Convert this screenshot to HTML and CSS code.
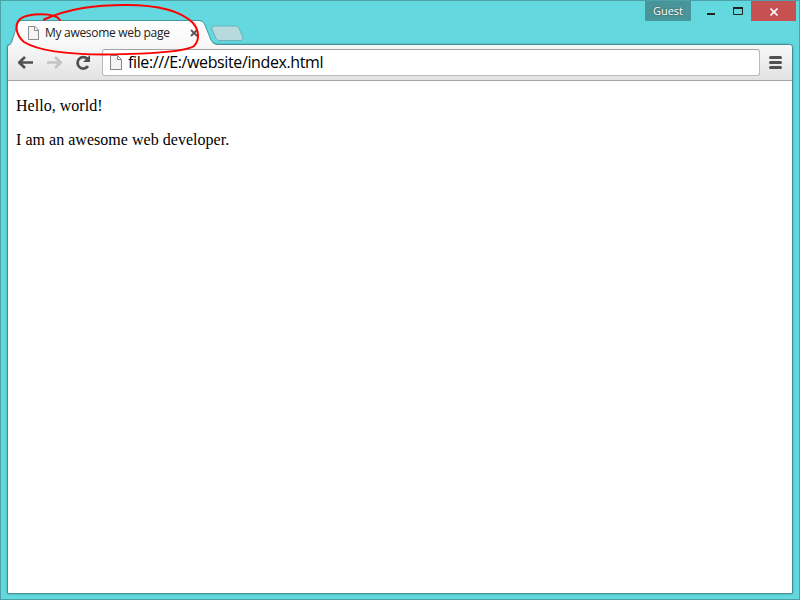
FILE: index.html
```html
<!DOCTYPE html>
<html lang="en">
<head>
<meta charset="utf-8">
<title>My awesome web page</title>
<link rel="stylesheet" href="styles.css">
</head>
<body>
<div class="window">
  <header class="titlebar">
    <div class="tab">
      <svg class="tab-shape" width="214" height="28" viewBox="0 0 214 28">
        <defs><linearGradient id="tabfill" x1="0" y1="0" x2="0" y2="1"><stop offset="0" stop-color="#fff"/><stop offset="1" stop-color="#f7f7f7"/></linearGradient></defs>
        <path d="M1 28V25Q4 25 5 21L10 5Q11 1 15 1H192Q196 1 197.500 4L204 20Q206 24.500 210 24.500H214V28Z" fill="url(#tabfill)"/>
        <path d="M.5 28V26Q4 25 5 21L10 5Q11 .5 15 .5H192Q196 .5 197.500 4L204 20Q206 24.500 210 24.500H214" fill="none" stroke="#43979d"/>
      </svg>
      <svg class="page-icon" width="11" height="14" viewBox="0 0 11 14"><path d="M.5.500H7L10.500 4V13.500H.5ZM6.500 1V4.500H10" fill="#f4f4f4" stroke="#8b8b8b"/></svg>
      <span class="tab-title">My awesome web page</span>
      <svg class="tab-close" width="8" height="8" viewBox="0 0 8 8"><path d="M1 1L7 7M7 1L1 7" stroke="#555" stroke-width="1.800"/></svg>
    </div>
    <svg class="new-tab" width="33" height="17" viewBox="0 0 33 17"><path d="M3 1H25Q27 1 28 3L32 13Q32 15.500 30 15.500H8Q6 15.500 5 13.500L1 4Q0 1 3 1Z" fill="#b7dadf" stroke="#6db2b8"/></svg>
    <div class="controls">
      <span class="guest">Guest</span>
      <svg class="minmax" width="60" height="20" viewBox="0 0 60 20"><path d="M16 12H24V14H16Z" fill="#222"/><path d="M42.500 7H51.500V13.500H42.500Z" fill="none" stroke="#222"/><path d="M42 6H52V8H42Z" fill="#222"/></svg>
      <span class="close"><svg width="8" height="8" viewBox="0 0 8 8"><path d="M.5.500L7.500 7.500M7.500.500L.5 7.500" stroke="#fff" stroke-width="1.600"/></svg></span>
    </div>
  </header>
  <main class="frame">
    <nav class="toolbar">
      <svg class="back" width="17" height="14" viewBox="0 0 17 14"><path d="M8 1L2.200 6.500L8 12M2.500 6.500H16" fill="none" stroke="#505050" stroke-width="2.600" stroke-linejoin="round"/></svg>
      <svg class="forward" width="17" height="14" viewBox="0 0 17 14"><path d="M9 1L14.800 6.500L9 12M14.500 6.500H1" fill="none" stroke="#c3c3c3" stroke-width="2.600" stroke-linejoin="round"/></svg>
      <svg class="reload" width="16" height="16" viewBox="0 0 16 16"><path d="M12.500 4A5.700 5.700 0 1 0 13 11" fill="none" stroke="#505050" stroke-width="2.800"/><path d="M15 0V7H8Z" fill="#505050"/></svg>
      <div class="address">
        <svg class="page-icon" width="12" height="15" viewBox="0 0 12 15"><path d="M.5.500H7.500L11.500 4.500V14.500H.5ZM7.500 1V4.500H11" fill="#f4f4f4" stroke="#858585"/></svg>
        <span class="url">file:///E:/website/index.html</span>
      </div>
      <svg class="menu" width="13" height="13" viewBox="0 0 13 13"><path d="M1.500 1.500H11.500M1.500 6.500H11.500M1.500 11.500H11.500" stroke="#505050" stroke-width="3" stroke-linecap="round"/></svg>
    </nav>
    <section class="document">
      <p>Hello, world!</p>
      <p>I am an awesome web developer.</p>
    </section>
  </main>
  <svg class="annotation" width="220" height="62" viewBox="0 0 220 62"><path d="M44 19.500C70 8 95 5 126 5C165 5 184 14 193 23C199 30 200 40 194 46C185 52 151 54 105 54.500C67 54.500 37 50 24 42C16 35 14 25 20 19C28 13 55 12 60 20" fill="none" stroke="#f00" stroke-width="2" stroke-linecap="round"/></svg>
</div>
</body>
</html>
```
FILE: styles.css
```css
* { box-sizing: border-box; }
body { margin: 0; overflow: hidden; }
svg { display: block; flex: none; }
.window {
  position: relative;
  width: 800px;
  height: 600px;
  border: 1px solid #4da2a8;
  background: #63d8df;
  display: flex;
  flex-direction: column;
  font-family: "Open Sans", "Noto Sans", sans-serif;
}
.titlebar { height: 43px; display: flex; align-items: flex-start; }
.tab {
  position: relative;
  z-index: 1;
  width: 210px;
  height: 28px;
  margin-top: 19px;
  display: flex;
  align-items: center;
  padding: 0 13px 3px 27px;
}
.tab > * { position: relative; }
.tab .tab-shape { position: absolute; left: 6px; top: 0; }
.tab-title { flex: 1; margin-left: 6px; font-size: 12px; line-height: 16px; letter-spacing: -0.3px; color: #222; white-space: nowrap; }
.new-tab { margin: 24px 0 0 0; position: relative; z-index: 2; }
.controls { margin-left: auto; margin-right: 3px; display: flex; height: 20px; }
.guest {
  width: 46px;
  background: #48969b;
  color: #fff;
  font-size: 11px;
  font-weight: 500;
  line-height: 20px;
  text-align: center;
  text-shadow: 0 0 2px #333;
}
.close { width: 45px; background: #c75050; display: flex; align-items: center; justify-content: center; padding-top: 1px; }
.frame {
  flex: 1;
  margin: 0 6px 5px;
  border: 1px solid #438f95;
  border-radius: 4px 4px 1px 1px;
  background: #fff;
  box-shadow: 0 0 2px #438f95;
  display: flex;
  flex-direction: column;
  overflow: hidden;
}
.toolbar {
  height: 36px;
  border-bottom: 1px solid #a6a6a6;
  background: linear-gradient(#f8f8f8, #e2e2e2);
  display: flex;
  align-items: center;
  padding: 0 10px 0 9px;
}
.forward { margin-left: 12px; }
.reload { margin-left: 12px; }
.address {
  width: 658px;
  height: 27px;
  margin-left: 11px;
  padding: 0 7px;
  border: 1px solid #b9b9b9;
  border-top-color: #a2a2a2;
  border-radius: 3px;
  background: #fff;
  display: flex;
  align-items: center;
}
.url { margin-left: 6px; font-size: 16px; line-height: 20px; letter-spacing: -0.38px; color: #000; position: relative; top: -1px; }
.menu { margin-left: 9px; }
.document { padding: 16px 8px; font: 16px/18px "Liberation Serif", serif; letter-spacing: 0.03px; color: #000; }
.document p { margin: 0 0 16px; }
.annotation { position: absolute; left: -1px; top: -1px; z-index: 3; }
```
